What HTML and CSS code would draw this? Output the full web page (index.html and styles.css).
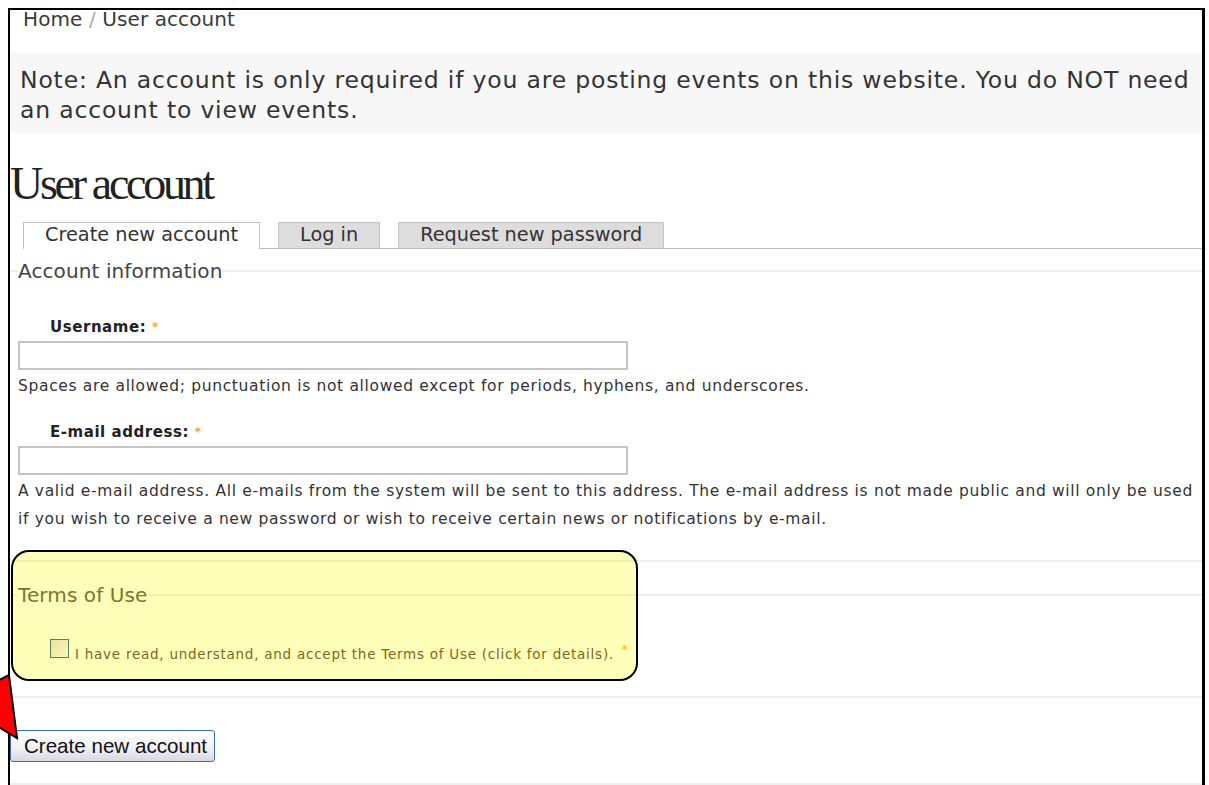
FILE: index.html
```html
<!DOCTYPE html>
<html lang="en">
<head>
<meta charset="utf-8">
<title>User account</title>
<link rel="stylesheet" href="styles.css">
</head>
<body>
<div class="frame">
  <div class="breadcrumb">Home <span class="crumb-sep">/</span> User account</div>

  <div class="note">Note: An account is only required if you are posting events on this website. You do NOT need an account to view events.</div>

  <h1 class="page-title">User account</h1>

  <ul class="tabs">
    <li class="tab active">Create new account</li>
    <li class="tab">Log in</li>
    <li class="tab">Request new password</li>
  </ul>

  <form class="user-form">
    <div class="group account-group">
      <div class="legend"><span class="legend-text">Account information</span></div>

      <div class="field field-first">
        <label class="field-label" for="edit-name">Username: <span class="required">*</span></label>
        <input class="text-input" id="edit-name" type="text">
        <div class="description">Spaces are allowed; punctuation is not allowed except for periods, hyphens, and underscores.</div>
      </div>

      <div class="field">
        <label class="field-label" for="edit-mail">E-mail address: <span class="required">*</span></label>
        <input class="text-input" id="edit-mail" type="text">
        <div class="description">A valid e-mail address. All e-mails from the system will be sent to this address. The e-mail address is not made public and will only be used if you wish to receive a new password or wish to receive certain news or notifications by e-mail.</div>
      </div>
    </div>

    <div class="group terms-group">
      <div class="legend"><span class="legend-text">Terms of Use</span></div>
      <div class="check-row">
        <span class="checkbox"></span>
        <span class="check-label">I have read, understand, and accept the Terms of Use (click for details).</span>
        <span class="required small">*</span>
      </div>
    </div>

    <div class="actions">
      <button class="submit" type="button">Create new account</button>
    </div>
  </form>
</div>

<div class="highlight"></div>

<svg class="pointer" width="30" height="90" viewBox="0 0 30 90">
  <polygon points="-20,30 9,15 17,78 -20,56" fill="#ff0000" stroke="#000" stroke-width="2" stroke-linejoin="miter"/>
</svg>
</body>
</html>
```

FILE: styles.css
```css
html {
  overflow: hidden;
}

body {
  margin: 0;
  background: #fff;
  color: #333;
  font-family: "DejaVu Sans", Verdana, sans-serif;
}

.frame {
  box-sizing: border-box;
  width: 1197px;
  min-height: 800px;
  margin: 8px 0 0 8px;
  border-top: 2px solid #000;
  border-left: 2px solid #000;
  border-right: 3px solid #000;
}

/* breadcrumb trail */
.breadcrumb {
  padding: 0 0 25px 13px;
  font-size: 20px;
  line-height: 18px;
  letter-spacing: 0.1px;
  color: #3a3a3a;
}

.crumb-sep {
  color: #aaa;
}

/* site notice */
.note {
  padding: 12px 10px 8px 10px;
  background: #f7f7f7;
  font-size: 23.5px;
  line-height: 30px;
  letter-spacing: 0.82px;
  color: #333;
}

.page-title {
  margin: 28px 0 0 0;
  font-family: "Liberation Serif", "Times New Roman", serif;
  font-weight: normal;
  font-size: 46px;
  line-height: 46px;
  letter-spacing: -3.3px;
  color: #222;
}

/* tab strip */
.tabs {
  display: flex;
  gap: 18px;
  margin: 15px 0 0 13px;
  padding: 0;
  list-style: none;
  border-bottom: 1px solid #bbb;
}

.tab {
  height: 25px;
  padding: 0 21px;
  border: 1px solid #c4c4c4;
  border-bottom: none;
  background: #ddd;
  font-size: 19.3px;
  line-height: 24px;
  color: #333;
}

.tab.active {
  height: 26px;
  margin-bottom: -1px;
  background: #fff;
}

/* form groups */
.group {
  border-bottom: 2px solid #eee;
}

.account-group {
  padding-bottom: 27px;
}

.terms-group {
  padding-bottom: 37px;
}

.legend {
  display: flex;
  align-items: center;
  margin-top: 11px;
  height: 22px;
}

.legend::before {
  content: "";
  width: 8px;
  height: 2px;
  background: #eee;
}

.legend::after {
  content: "";
  flex: 1;
  height: 2px;
  background: #eee;
}

.legend-text {
  font-size: 20px;
  line-height: 22px;
  letter-spacing: 0.1px;
  color: #444;
}

.terms-group .legend {
  margin-top: 22px;
}

.field {
  margin-top: 23px;
  padding-left: 8px;
}

.field-first {
  margin-top: 36px;
}

.field-label {
  display: block;
  padding-left: 32px;
  font-size: 15px;
  font-weight: bold;
  line-height: 18px;
  letter-spacing: 0.55px;
  color: #222;
}

.required {
  color: #f3a81e;
  font-weight: bold;
  font-size: 12px;
  vertical-align: top;
}

.text-input {
  display: block;
  box-sizing: border-box;
  width: 610px;
  height: 29px;
  margin: 5px 0 0 0;
  border: 2px solid #c2c4c6;
  background: #fff;
}

.description {
  margin-top: 2px;
  font-size: 15.5px;
  line-height: 28px;
  letter-spacing: 0.66px;
  color: #333;
}

/* terms checkbox */
.check-row {
  display: flex;
  align-items: flex-start;
  margin: 33px 0 0 40px;
  height: 20px;
}

.checkbox {
  box-sizing: border-box;
  width: 19px;
  height: 19px;
  border: 1px solid #1c5180;
  background: linear-gradient(135deg, #dcdcd5, #f8f8f6);
}

.check-label {
  margin: 7px 0 0 6px;
  font-size: 13.5px;
  line-height: 16px;
  letter-spacing: 0.75px;
  color: #4a2e2e;
}

.required.small {
  margin: 6px 0 0 8px;
  font-size: 10px;
  line-height: 10px;
}

/* submit */
.actions {
  padding: 32px 0 21px 0;
  border-bottom: 2px solid #eee;
}

.submit {
  display: block;
  box-sizing: border-box;
  width: 205px;
  height: 32px;
  padding: 0 0 0 6px;
  border: 1px solid #3c6ea5;
  border-radius: 3px;
  background: linear-gradient(#ffffff, #f1f1f5 55%, #d8d8e4);
  font-family: "Liberation Sans", Arial, sans-serif;
  font-size: 20.6px;
  color: #111;
}

/* annotation overlay */
.highlight {
  position: absolute;
  left: 11px;
  top: 550px;
  width: 627px;
  height: 131px;
  box-sizing: border-box;
  border: 2px solid #000;
  border-radius: 18px;
  background: rgba(255, 255, 0, 0.27);
}

.pointer {
  position: absolute;
  left: 0;
  top: 660px;
  overflow: hidden;
}
```
